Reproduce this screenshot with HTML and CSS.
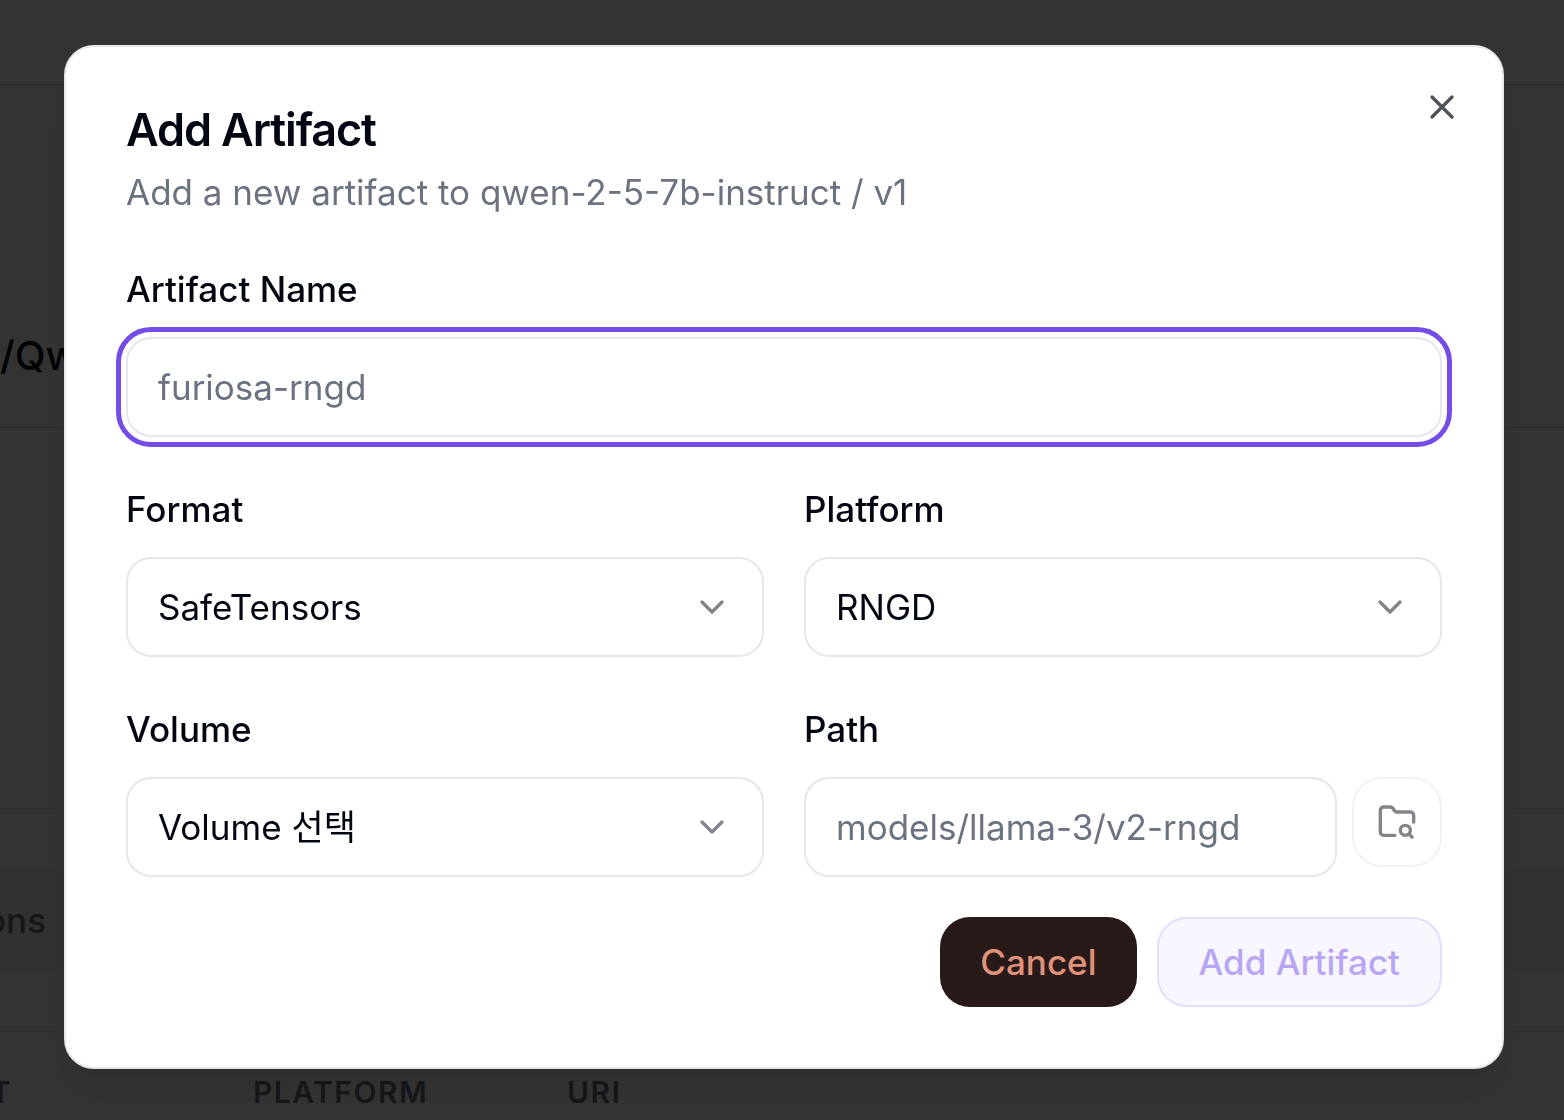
FILE: index.html
```html
<!DOCTYPE html>
<html lang="ko">

<head>
  <meta charset="UTF-8">
  <meta name="viewport" content="width=device-width, initial-scale=1.0">
  <title>Add Artifact</title>
  <link rel="stylesheet" href="styles.css">
</head>

<body>
  <!-- page behind the dialog -->
  <div class="page" aria-hidden="true">
    <div class="topbar"></div>
    <div class="model">
      <span class="model-name">/Qwen</span>
    </div>
    <div class="summary"></div>
    <div class="tabs">
      <div class="tab"><span class="cut">ons</span></div>
    </div>
    <table class="list">
      <thead>
        <tr>
          <th class="col-format"><span class="cut">T</span></th>
          <th class="col-platform">PLATFORM</th>
          <th>URI</th>
        </tr>
      </thead>
    </table>
  </div>

  <div class="overlay">
    <div class="dialog" role="dialog" aria-modal="true" aria-labelledby="title">
      <h2 class="title" id="title">Add Artifact</h2>
      <p class="desc">Add a new artifact to qwen-2-5-7b-instruct / v1</p>

      <form class="form">
        <div class="field wide">
          <label for="name">Artifact Name</label>
          <input class="control focused" id="name" type="text" placeholder="furiosa-rngd">
        </div>

        <div class="field">
          <label for="format">Format</label>
          <div class="select">
            <select class="control" id="format">
              <option>SafeTensors</option>
            </select>
            <svg class="icon" viewBox="0 0 24 24"><path d="m6 9 6 6 6-6"/></svg>
          </div>
        </div>

        <div class="field">
          <label for="platform">Platform</label>
          <div class="select">
            <select class="control" id="platform">
              <option>RNGD</option>
            </select>
            <svg class="icon" viewBox="0 0 24 24"><path d="m6 9 6 6 6-6"/></svg>
          </div>
        </div>

        <div class="field">
          <label for="volume">Volume</label>
          <div class="select">
            <select class="control" id="volume">
              <option>Volume 선택</option>
            </select>
            <svg class="icon" viewBox="0 0 24 24"><path d="m6 9 6 6 6-6"/></svg>
          </div>
        </div>

        <div class="field">
          <label for="path">Path</label>
          <div class="path-row">
            <input class="control" id="path" type="text" placeholder="models/llama-3/v2-rngd">
            <button class="btn browse" type="button" aria-label="Browse" disabled>
              <svg class="icon" viewBox="0 0 24 24">
                <path d="M10.7 20H4a2 2 0 0 1-2-2V5a2 2 0 0 1 2-2h3.9a2 2 0 0 1 1.69.9l.81 1.2a2 2 0 0 0 1.67.9H20a2 2 0 0 1 2 2v4.1"/>
                <path d="m21 21-1.9-1.9"/>
                <circle cx="17" cy="17" r="3"/>
              </svg>
            </button>
          </div>
        </div>

        <div class="footer wide">
          <button class="btn cancel" type="button">Cancel</button>
          <button class="btn submit" type="submit" disabled>Add Artifact</button>
        </div>
      </form>

      <button class="close" type="button" aria-label="Close">
        <svg class="icon" viewBox="0 0 24 24"><path d="M18 6 6 18M6 6l12 12"/></svg>
      </button>
    </div>
  </div>
</body>

</html>
```
FILE: styles.css
```css
* {
  box-sizing: border-box;
}
body {
  margin: 0;
  overflow: hidden;
  background: #fff;
  color: #030712;
  font-family: Inter, "Noto Sans CJK KR", sans-serif;
  font-size: 35px;
  line-height: 50px;
  font-optical-sizing: none;
}
input, select, button {
  font: inherit;
  color: inherit;
}
.icon {
  display: block;
  width: 40px;
  height: 40px;
  fill: none;
  stroke: currentColor;
  stroke-width: 2;
  stroke-linecap: round;
  stroke-linejoin: round;
}

/* page behind */
.page {
  height: 100vh;
  overflow: hidden;
}
.topbar {
  height: 86px;
  border-bottom: 2px solid #e5e7eb;
}
.model {
  display: flex;
  align-items: flex-end;
  height: 342px;
  padding-bottom: 45px;
  border-bottom: 2px solid #e5e7eb;
  font-size: 40px;
  font-weight: 500;
}
.summary {
  height: 382px;
  border-bottom: 2px solid #e5e7eb;
}
.tabs {
  padding: 60px 0;
  border-bottom: 2px solid #e5e7eb;
}
.tab {
  height: 100px;
  padding: 25px 0;
  background: #f3f4f6;
  color: #6b7280;
  font-weight: 500;
}
.cut {
  display: flex;
  justify-content: flex-end;
  width: 46px;
  overflow: hidden;
}
.list {
  width: 100%;
  table-layout: fixed;
  border-collapse: collapse;
  color: #6b7280;
  font-size: 30px;
}
.list th {
  padding: 35px 0;
  text-align: left;
  font-weight: 600;
  letter-spacing: 0.05em;
}
.list .cut {
  width: 12px;
}
.list .col-format {
  width: 253px;
}
.list .col-platform {
  width: 314px;
}

/* dialog */
.overlay {
  position: fixed;
  inset: 0;
  padding: 45px 60px 45px 64px;
  background: rgba(0, 0, 0, 0.8);
}
.dialog {
  position: relative;
  padding: 60px;
  border: 2px solid #e5e7eb;
  border-radius: 30px;
  background: #fff;
  box-shadow: 0 25px 38px -8px rgba(0, 0, 0, 0.1), 0 10px 15px -10px rgba(0, 0, 0, 0.1);
}
.title {
  margin: 0 0 15px;
  font-size: 45px;
  line-height: 45px;
  font-weight: 600;
  letter-spacing: -0.025em;
}
.desc {
  margin: 0 0 55px;
  color: #6b7280;
}
.form {
  display: grid;
  grid-template-columns: 1fr 1fr;
  gap: 55px 40px;
}
.wide {
  grid-column: 1 / -1;
}
.field {
  display: flex;
  flex-direction: column;
  gap: 31px;
  min-width: 0;
}
label {
  line-height: 34px;
  font-weight: 500;
}
.control {
  width: 100%;
  min-width: 0;
  height: 100px;
  padding: 0 30px;
  border: 2px solid #e5e7eb;
  border-radius: 25px;
  outline: none;
  background: #fff;
  appearance: none;
}
.control::placeholder {
  color: #6b7280;
  opacity: 1;
}
.control:focus, .focused {
  outline: 5px solid #744ce8;
  outline-offset: 5px;
}
.select {
  position: relative;
}
.select .icon {
  position: absolute;
  top: 30px;
  right: 32px;
  color: #838489;
  pointer-events: none;
}
.path-row {
  display: flex;
  align-items: flex-start;
  gap: 15px;
}
.btn {
  height: 90px;
  padding: 0 40px;
  border: 0;
  border-radius: 30px;
  font-weight: 500;
}
.browse {
  flex: none;
  width: 90px;
  padding: 0 23px;
  border: 2px solid #f2f2f3;
  background: #fff;
  color: #838389;
}
.footer {
  display: flex;
  justify-content: flex-end;
  gap: 20px;
  margin-top: -15px;
}
.cancel {
  background: #291a1a;
  color: #e0937a;
}
.submit {
  border: 2px solid #e2defb;
  background: #f8f7ff;
  color: #b8a5f4;
}
.close {
  position: absolute;
  top: 40px;
  right: 40px;
  padding: 0;
  border: 0;
  background: none;
  color: #50525a;
}
```
